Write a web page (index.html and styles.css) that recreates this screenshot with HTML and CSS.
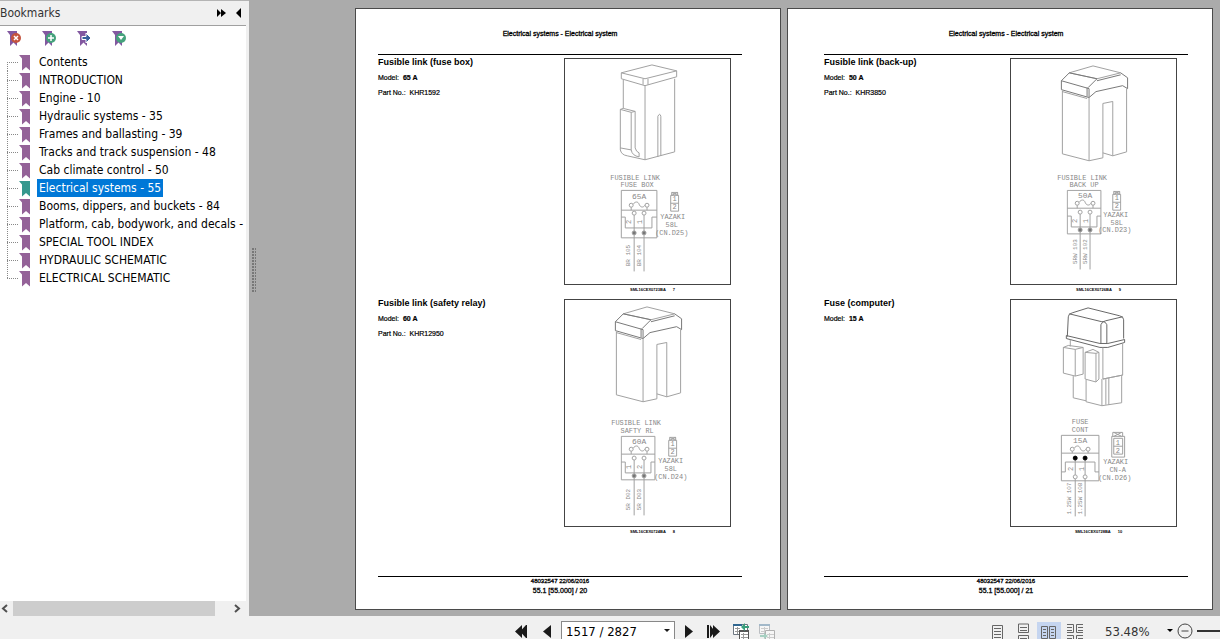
FILE: index.html
```
<!DOCTYPE html>
<html lang="en">
  <head>
    <meta charset="utf-8">
    <meta name="viewport" content="width=device-width, initial-scale=1.0">
    <title>Service Manual</title>
    <link rel="stylesheet" href="styles.css">
  </head>
  <body>
    <!-- shared shapes -->
    <svg class="defs" width="0" height="0" aria-hidden="true">
      <symbol id="mark" viewBox="0 0 12 17">
        <path d="M0 1h11v15.500l-4-3.500-4 3.500v-12z"/>
      </symbol>
      <symbol id="flag" viewBox="0 0 16 17">
        <path d="M0 1h10v15l-3.500-3.500-3.500 3.500v-11z" fill="#8258a0"/>
      </symbol>
      <symbol id="relayBody" viewBox="0 0 167 228">
        <path d="M59 14L83 7l28 7-24 6z"/>
        <path d="M59 14l-8 8v9l28 8v-9l-28-8M87 20l-9 9M77 29v9M111 14l7 5v11l-5-3-27 6-7 6M87 22l24-6M59 14l28 6" stroke="#777"/>
        <path d="M52 32v64l27 7V39M52 33l25 7M79 103l14-3V45l10-2v55l-10-3M103 98l14-4V30"/>
      </symbol>
      <symbol id="fuseBox" viewBox="0 0 60 90">
        <path d="M1 1h34v44H1zM1 19h34M11 16v3M27 16v3M1 27h4v11h26V27h4M14 25v56M24 25v56"/>
        <path d="M13 13c2-3 5-3 6 0s4 4 6 1"/>
        <circle cx="11" cy="14" r="2"/><circle cx="27" cy="14" r="2"/>
        <circle cx="14" cy="23" r="2"/><circle cx="24" cy="23" r="2"/>
        <circle cx="14" cy="41" r="2" fill="#777"/><circle cx="24" cy="41" r="2" fill="#777"/>
      </symbol>
      <symbol id="plug" viewBox="0 0 10 22">
        <path d="M1 4h8v16H1zM1 12h8M2 4V1h6v3M2 1l6 3M8 1L2 4"/>
      </symbol>
    </svg>

    <div class="workspace">
      <aside class="sidebar">
        <header class="panelHead">
          <h2>Bookmarks</h2>
          <button type="button" aria-label="More"><svg width="9" height="8"><path d="M0 0l4 4-4 4zM4 0l5 4-5 4z"/></svg></button>
          <button type="button" aria-label="Collapse"><svg width="5" height="10"><path d="M5 0v10L0 5z"/></svg></button>
        </header>
        <div class="panelTools">
          <button type="button" aria-label="Delete bookmark"><svg width="16" height="17"><use href="#flag"/><circle cx="9" cy="8" r="5" fill="#c4533d"/><path d="M7 6l4 4M11 6l-4 4" stroke="#fff" stroke-width="1.500"/></svg></button>
          <button type="button" aria-label="Add bookmark"><svg width="16" height="17"><use href="#flag"/><circle cx="9" cy="8" r="5" fill="#45a27c"/><path d="M6 8h6M9 5v6" stroke="#fff" stroke-width="1.500"/></svg></button>
          <button type="button" aria-label="Go to bookmark"><svg width="16" height="17"><use href="#flag"/><path d="M5 6.500h4V3l5 5-5 5V9.500H5z" fill="#365f9b" stroke="#fff"/></svg></button>
          <button type="button" aria-label="Expand bookmark"><svg width="16" height="17"><use href="#flag"/><circle cx="9" cy="8" r="5" fill="#45a27c"/><path d="M6 6h6l-3 4z" fill="#fff"/></svg></button>
        </div>
        <ul class="tree">
          <li><span class="branch"></span><svg class="mark"><use href="#mark"/></svg><a href="#">Contents</a></li>
          <li><span class="branch"></span><svg class="mark"><use href="#mark"/></svg><a href="#">INTRODUCTION</a></li>
          <li><span class="branch"></span><svg class="mark"><use href="#mark"/></svg><a href="#">Engine - 10</a></li>
          <li><span class="branch"></span><svg class="mark"><use href="#mark"/></svg><a href="#">Hydraulic systems - 35</a></li>
          <li><span class="branch"></span><svg class="mark"><use href="#mark"/></svg><a href="#">Frames and ballasting - 39</a></li>
          <li><span class="branch"></span><svg class="mark"><use href="#mark"/></svg><a href="#">Tracks and track suspension - 48</a></li>
          <li><span class="branch"></span><svg class="mark"><use href="#mark"/></svg><a href="#">Cab climate control - 50</a></li>
          <li class="selected"><span class="branch"></span><svg class="mark"><use href="#mark"/></svg><a href="#">Electrical systems - 55</a></li>
          <li><span class="branch"></span><svg class="mark"><use href="#mark"/></svg><a href="#">Booms, dippers, and buckets - 84</a></li>
          <li><span class="branch"></span><svg class="mark"><use href="#mark"/></svg><a href="#">Platform, cab, bodywork, and decals -</a></li>
          <li><span class="branch"></span><svg class="mark"><use href="#mark"/></svg><a href="#">SPECIAL TOOL INDEX</a></li>
          <li><span class="branch"></span><svg class="mark"><use href="#mark"/></svg><a href="#">HYDRAULIC SCHEMATIC</a></li>
          <li><span class="branch"></span><svg class="mark"><use href="#mark"/></svg><a href="#">ELECTRICAL SCHEMATIC</a></li>
        </ul>
        <div class="scrollbar">
          <button type="button" aria-label="Scroll left"><svg width="7" height="9"><path d="M6 1L2 4.500 6 8"/></svg></button>
          <div class="track"><div class="thumb"></div></div>
          <button type="button" aria-label="Scroll right"><svg width="7" height="9"><path d="M1 1l4 3.500L1 8"/></svg></button>
        </div>
      </aside>

      <div class="splitter"><div class="grip"></div></div>

      <main class="viewer">
        <article class="page pageLeft">
          <header class="pageHead">Electrical systems - Electrical system</header>
          <section class="part">
            <div class="partText">
              <h3>Fusible link (fuse box)</h3>
              <p>Model: <b>65 A</b></p>
              <p>Part No.: &nbsp;KHR1592</p>
            </div>
            <figure>
              <svg class="drawing" viewBox="0 0 167 228">
                <path d="M57 14L88 6l25 6v6l-32 9-24-7zM57 14l24 6 32-8M79 20v6M84 20v6"/>
                <path d="M59 21v29M81 27v75l30-8V20M94 99V58q2-4 3 0v40"/>
                <path d="M56 51l3-1 12 3-4 1zM56 51v41q1 5 7 6l18 4M67 54v38q1 6 8 7M71 53v37q1 4 4 5v4M56 90l11 2"/>
                <text x="71" y="122">FUSIBLE LINK</text>
                <text x="73" y="130">FUSE BOX</text>
                <path d="M57 133h36v48H57zM57 153h36M67 150v3M83 150v3M57 160h4v11h27v-11h5M70 158v57M80 158v57M69 147c2-3 5-3 6 0s4 4 6 1"/>
                <circle cx="67" cy="148" r="2"/><circle cx="83" cy="148" r="2"/>
                <circle cx="70" cy="156" r="2"/><circle cx="80" cy="156" r="2"/>
                <circle cx="70" cy="176" r="2" fill="#777"/><circle cx="80" cy="176" r="2" fill="#777"/>
                <text class="big" x="75" y="142">65A</text>
                <text transform="translate(67 165) rotate(-90)">2</text>
                <text transform="translate(78 165) rotate(-90)">1</text>
                <text class="wire" transform="translate(66 199) rotate(-90)">BR 105</text>
                <text class="wire" transform="translate(77 199) rotate(-90)">BR 104</text>
                <use href="#plug" x="106" y="134" width="10" height="22"/>
                <text x="111" y="144">1</text><text x="111" y="152">2</text>
                <text x="109" y="162">YAZAKI</text>
                <text x="108" y="170">58L</text>
                <text x="108" y="178">(CN.D25)</text>
              </svg>
              <figcaption>SML16CEX0723BA <b>7</b></figcaption>
            </figure>
          </section>
          <section class="part">
            <div class="partText">
              <h3>Fusible link (safety relay)</h3>
              <p>Model: <b>60 A</b></p>
              <p>Part No.: &nbsp;KHR12950</p>
            </div>
            <figure>
              <svg class="drawing" viewBox="0 0 167 228">
                <use href="#relayBody" width="167" height="228"/>
                <text x="72" y="127">FUSIBLE LINK</text>
                <text x="73" y="135">SAFTY RL</text>
                <use href="#fuseBox" x="56" y="137" width="60" height="90"/>
                <text class="big" x="75" y="146">60A</text>
                <text transform="translate(67 169) rotate(-90)">1</text>
                <text transform="translate(78 169) rotate(-90)">2</text>
                <text class="wire" transform="translate(66 202) rotate(-90)">5R D02</text>
                <text class="wire" transform="translate(77 202) rotate(-90)">5R D03</text>
                <use href="#plug" x="104" y="138" width="10" height="22"/>
                <text x="109" y="148">1</text><text x="109" y="156">2</text>
                <text x="107" y="165">YAZAKI</text>
                <text x="107" y="173">58L</text>
                <text x="107" y="181">(CN.D24)</text>
              </svg>
              <figcaption>SML16CEX0724BA <b>8</b></figcaption>
            </figure>
          </section>
          <footer class="pageFoot"><small>48032547 22/06/2016</small>55.1 [55.000] / 20</footer>
        </article>

        <article class="page pageRight">
          <header class="pageHead">Electrical systems - Electrical system</header>
          <section class="part">
            <div class="partText">
              <h3>Fusible link (back-up)</h3>
              <p>Model: <b>50 A</b></p>
              <p>Part No.: &nbsp;KHR3850</p>
            </div>
            <figure>
              <svg class="drawing" viewBox="0 0 167 228">
                <use href="#relayBody" width="167" height="228"/>
                <text x="72" y="122">FUSIBLE LINK</text>
                <text x="74" y="130">BACK UP</text>
                <use href="#fuseBox" x="56" y="132" width="60" height="90"/>
                <text class="big" x="75" y="141">50A</text>
                <text transform="translate(67 164) rotate(-90)">2</text>
                <text transform="translate(78 164) rotate(-90)">1</text>
                <text class="wire" transform="translate(67 195) rotate(-90)">5RW 103</text>
                <text class="wire" transform="translate(77 195) rotate(-90)">5RW 102</text>
                <use href="#plug" x="102" y="133" width="10" height="22"/>
                <text x="107" y="143">1</text><text x="107" y="151">2</text>
                <text x="106" y="160">YAZAKI</text>
                <text x="107" y="168">58L</text>
                <text x="105" y="175">(CN.D23)</text>
              </svg>
              <figcaption>SML16CEX0726BA <b>9</b></figcaption>
            </figure>
          </section>
          <section class="part">
            <div class="partText">
              <h3>Fuse (computer)</h3>
              <p>Model: <b>15 A</b></p>
            </div>
            <figure>
              <svg class="drawing" viewBox="0 0 167 228">
                <path d="M57 37l1-20q0-3 4-4l16-5 32 8q4 1 4 4v19M59 14l33 8q2 0 4-1l17-4M91 44V25q3-6 6 0v19" stroke="#666"/>
                <path d="M56 36l34 8h8l17-4v3l-17 5h-8l-34-9z" stroke="#666"/>
                <path d="M60 40v7M93 48v32l20-4V44M53 48l5-2 15 2-8 2zM53 48v26l12 3 8-2V48M65 50v27"/>
                <path d="M75 53l8-3 6 3-3 1zM75 53v27l11 3 3-3V53M86 54v29"/>
                <path d="M63 77v22l13 3M76 81v22l16 4 20-3V77M92 80v27M96 80v26M99 79v27M93 80l20-4"/>
                <text x="70" y="126">FUSE</text>
                <text x="70" y="134">CONT</text>
                <path d="M51 137h38v46H51zM51 155h38M62 153v2M78 153v2M51 174h4v-10h30v10h4M65 160v17M75 160v17M65 181v38M75 181v38M64 150c2-3 5-3 6 0s4 4 6 1"/>
                <circle cx="62" cy="151" r="2"/><circle cx="78" cy="151" r="2"/>
                <circle cx="65" cy="160" r="2" class="dot"/><circle cx="75" cy="160" r="2" class="dot"/>
                <circle cx="65" cy="179" r="2" fill="#fff"/><circle cx="75" cy="179" r="2" fill="#fff"/>
                <text class="big" x="70" y="145">15A</text>
                <text transform="translate(63 171) rotate(-90)">2</text>
                <text transform="translate(74 171) rotate(-90)">1</text>
                <text class="wire" transform="translate(61 201) rotate(-90)">1.25W 107</text>
                <text class="wire" transform="translate(72 201) rotate(-90)">1.25W 108</text>
                <path d="M102 138h13v21h-13zM104 140h9v16h-9zM104 148h9M103 138v-4h10v4M104 134l8 4M112 134l-8 4"/>
                <text x="108" y="147">1</text><text x="108" y="155">2</text>
                <text x="106" y="166">YAZAKI</text>
                <text x="108" y="174">CN-A</text>
                <text x="105" y="182">(CN.D26)</text>
              </svg>
              <figcaption>SML16CEX0728BA <b>10</b></figcaption>
            </figure>
          </section>
          <footer class="pageFoot"><small>48032547 22/06/2016</small>55.1 [55.000] / 21</footer>
        </article>
      </main>
    </div>

    <footer class="statusbar">
      <div class="pager">
        <button type="button" aria-label="First page"><svg width="14" height="13"><path d="M7 0v13L0 6.500zM11 0v13L5 6.500zM11 0h1v13h-1z"/></svg></button>
        <button type="button" aria-label="Previous page"><svg width="8" height="13"><path d="M8 0v13L0 6.500z"/></svg></button>
        <div class="combo">
          <input type="text" value="1517 / 2827" aria-label="Page">
          <button type="button" aria-label="Choose page"><svg width="6" height="4"><path d="M0 0h6L3 3z"/></svg></button>
        </div>
        <button type="button" aria-label="Next page"><svg width="8" height="13"><path d="M0 0v13l8-6.500z"/></svg></button>
        <button type="button" aria-label="Last page"><svg width="14" height="13"><path d="M6 0v13l7-6.500zM3 0v13l5-6.500zM0 0h2v13H0z"/></svg></button>
        <div class="history">
          <button type="button" aria-label="Previous view"><svg width="17" height="17"><path d="M.5 1.500h14v10H.5z" fill="#fff" stroke="#6d7680"/><path d="M0 1h9v2H0z" fill="#2f6690"/><path d="M2 5.500h5M2 8.500h5M4.500 4v7" stroke="#999"/><path d="M6.500 7.500h9v9h-9z" fill="#fff" stroke="#555"/><path d="M6 7h10v2H6z" fill="#555"/><path d="M8 11.500h7M8 14.500h7M10.500 10v6" stroke="#999"/><path d="M8 4l4-4v3h4v2h-4v3z" fill="#3a9f7c"/></svg></button>
          <button type="button" class="off" aria-label="Next view" disabled><svg width="17" height="17"><path d="M.5 1.500h10v9H.5z" fill="#fff" stroke="#6d7680"/><path d="M0 1h11v2H0z" fill="#2f6690"/><path d="M2 5.500h7M2 8.500h7M5.500 4v6" stroke="#999"/><path d="M6.500 7.500h9v9h-9z" fill="#fff" stroke="#555"/><path d="M8 11.500h7M8 14.500h7M10.500 10v6" stroke="#999"/><path d="M1 12h4v-2l4 3-4 3v-2H1z" fill="#3a9f7c"/></svg></button>
        </div>
      </div>
      <div class="layouts">
        <button type="button" aria-label="Single page"><svg width="24" height="18"><path d="M7.500 3.500h10v14h-10zM9 6.500h7M9 9.500h7M9 12.500h7M9 15.500h7"/></svg></button>
        <button type="button" aria-label="Continuous"><svg width="24" height="18"><path d="M7.500 2v8.500h10V2zM9 5.500h7M9 8.500h7M7.500 18v-4.500h10V18M9 16.500h7"/></svg></button>
        <button type="button" class="on" aria-label="Facing"><svg width="24" height="18"><path d="M4.500 4.500h6v12h-6zM12.500 4.500h6v12h-6zM6 7.500h3M6 10.500h3M6 13.500h3M14 7.500h3M14 10.500h3M14 13.500h3"/></svg></button>
        <button type="button" aria-label="Continuous facing"><svg width="24" height="18"><path d="M4 2.500h6.500v8H4M4 5.500h5M4 8.500h5M20 2.500h-6.500v8H20M15 5.500h5M15 8.500h5M4 13.500h6.500V18M4 16.500h5M20 13.500h-6.500V18M15 16.500h5"/></svg></button>
      </div>
      <div class="zoom">
        <span class="zoomValue">53.48%</span>
        <button type="button" aria-label="Choose zoom"><svg width="6" height="4"><path d="M0 0h6L3 3z"/></svg></button>
        <button type="button" class="minus" aria-label="Zoom out"><svg width="16" height="16"><circle cx="8" cy="8" r="7"/><path d="M4.500 8h7"/></svg></button>
        <div class="slider"></div>
      </div>
    </footer>
  </body>
</html>
```
FILE: styles.css
```
* {
  box-sizing: border-box;
}
html, body {
  height: 100%;
}
body {
  margin: 0;
  display: flex;
  flex-direction: column;
  overflow: hidden;
  background-color: #f0f0f0;
  color: #000;
  font-family: "DejaVu Sans Condensed", "Noto Sans", sans-serif;
  font-size: 12px;
}
button {
  display: flex;
  align-items: center;
  justify-content: center;
  margin: 0;
  padding: 0;
  border: 0;
  background: none;
  cursor: pointer;
}
svg {
  display: block;
  flex: none;
}
.defs {
  position: absolute;
}
.workspace {
  flex: 1;
  display: flex;
  min-height: 0;
  background-color: #ababab;
}

/* bookmarks panel */
.sidebar {
  flex: none;
  width: 249px;
  display: flex;
  flex-direction: column;
  padding-right: 3px;
  background-color: #f0f0f0;
  border-top: 1px solid #b4b4b4;
}
.panelHead {
  display: flex;
  align-items: center;
  gap: 10px;
  height: 25px;
  padding-right: 5px;
  border-bottom: 1px solid #a0a0a0;
}
.panelHead h2 {
  flex: 1;
  margin: 0;
  font-size: 12px;
  font-weight: normal;
  color: #333;
}
.panelTools {
  display: flex;
  gap: 19px;
  padding: 4px 7px 6px;
  background-color: #fff;
}
.tree {
  flex: 1;
  margin: 0;
  padding: 0;
  overflow: hidden;
  list-style: none;
  background-color: #fff;
}
.tree li {
  display: flex;
  align-items: center;
  height: 18px;
  padding-left: 7px;
  background: repeating-linear-gradient(#888 0 1px, transparent 1px 2px) 7px 0 / 1px 18px no-repeat;
}
.tree li:first-child {
  background-position: 7px 9px;
}
.tree li:last-child {
  background-size: 1px 10px;
}
.branch {
  flex: none;
  width: 12px;
  height: 1px;
  background: repeating-linear-gradient(90deg, #888 0 1px, transparent 1px 2px);
}
.mark {
  width: 12px;
  height: 17px;
  margin-right: 6px;
  fill: #946298;
}
.tree a {
  padding: 0 2px;
  line-height: 18px;
  white-space: nowrap;
  text-decoration: none;
  color: #000;
}
.selected .mark {
  fill: #35988e;
}
.tree .selected a {
  background-color: #0078d7;
  color: #fff;
}
.scrollbar {
  display: flex;
  height: 15px;
}
.scrollbar button {
  flex: none;
  width: 13px;
  padding-right: 4px;
}
.scrollbar svg {
  fill: none;
  stroke: #505050;
  stroke-width: 2;
}
.track {
  flex: 1;
}
.thumb {
  width: 92%;
  height: 100%;
  background-color: #cdcdcd;
}
.splitter {
  flex: none;
  width: 8px;
  padding: 248px 0 0 3px;
}
.grip {
  width: 4px;
  height: 45px;
  background: radial-gradient(circle at 1px 1px, #777 1px, transparent 1px) 0 0 / 3px 3px;
}

/* document pages */
.viewer {
  flex: 1;
  display: flex;
  gap: 6px;
  min-width: 0;
  padding: 8px 7px 6px 98px;
}
.page {
  flex: 1;
  display: flex;
  flex-direction: column;
  min-width: 0;
  padding-top: 20px;
  border: 1px solid #4a4a4a;
  background-color: #fff;
  font-family: "Liberation Sans", sans-serif;
  font-size: 7px;
  line-height: 9px;
}
.pageLeft {
  padding-left: 22px;
  padding-right: 38px;
}
.pageRight {
  padding-left: 36px;
  padding-right: 24px;
}
.pageHead {
  height: 26px;
  margin-bottom: 3px;
  border-bottom: 1px solid #000;
  text-align: center;
  -webkit-text-stroke: .3px #000;
}
.part {
  display: flex;
  justify-content: space-between;
  padding-right: 11px;
}
.partText h3 {
  margin: 0 0 6px;
  font-size: 9px;
  line-height: 9px;
}
.partText p {
  margin: 0 0 6px;
  -webkit-text-stroke: .2px #000;
}
.partText b {
  margin-left: 2px;
}
figure {
  flex: none;
  width: 167px;
  margin: 0;
}
.drawing {
  width: 100%;
  border: 1px solid #444;
  fill: none;
  stroke: #a0a0a0;
  stroke-width: 1;
}
.drawing text {
  fill: #888;
  stroke: none;
  font-family: "Liberation Mono", monospace;
  font-size: 7px;
  text-anchor: middle;
}
.drawing .big {
  font-size: 8px;
}
.drawing .wire {
  font-size: 6px;
}
.drawing .dot {
  fill: #000;
  stroke: #000;
}
figcaption {
  height: 14px;
  padding-left: 10px;
  text-align: center;
  font-size: 4px;
  font-weight: bold;
}
figcaption b {
  margin-left: 6px;
}
.pageFoot {
  margin-top: auto;
  margin-bottom: 14px;
  border-top: 1px solid #000;
  text-align: center;
  -webkit-text-stroke: .3px #000;
}
.pageFoot small {
  display: block;
  font-size: 6px;
}

/* bottom bar */
.statusbar {
  flex: none;
  display: flex;
  align-items: flex-start;
  height: 23px;
  padding-left: 515px;
  overflow: hidden;
}
.pager {
  flex: none;
  display: flex;
  align-items: center;
  gap: 14px;
  height: 30px;
  fill: #1a1a1a;
}
.combo {
  display: flex;
  width: 114px;
  height: 20px;
  margin: 0 -4px;
  border: 1px solid #888;
  background-color: #fff;
}
.combo input {
  flex: 1;
  min-width: 0;
  padding: 0 4px;
  border: 0;
  outline: 0;
  background: none;
  font-family: inherit;
  font-size: 13px;
}
.combo button {
  width: 14px;
}
.history {
  display: flex;
  gap: 9px;
  margin-left: -2px;
}
.off {
  opacity: .4;
}
.layouts {
  display: flex;
  gap: 2px;
  margin: 6px 18px 0 auto;
}
.layouts svg {
  fill: none;
  stroke: #666;
}
.layouts .on {
  background-color: #c5d5f0;
}
.zoom {
  display: flex;
  align-items: center;
  gap: 4px;
  height: 30px;
}
.zoomValue {
  width: 58px;
  font-size: 13px;
  color: #333;
}
.minus svg {
  fill: none;
  stroke: #444;
}
.slider {
  width: 23px;
  height: 2px;
  background-color: #333;
}
```
